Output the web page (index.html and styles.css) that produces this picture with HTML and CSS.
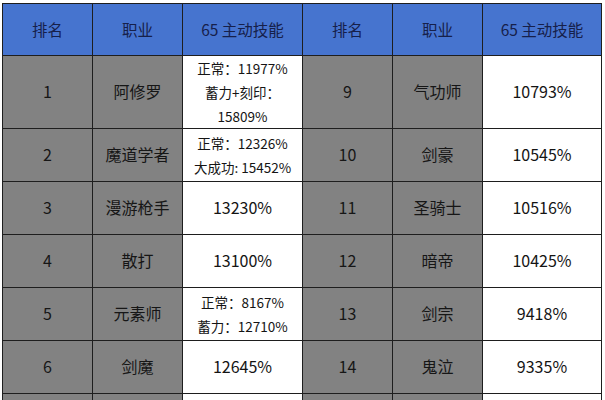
FILE: index.html
```html
<!DOCTYPE html>
<html lang="zh-CN">
<head>
<meta charset="utf-8">
<link rel="stylesheet" href="styles.css">
</head>
<body>
<table class="rank">
  <colgroup>
    <col class="c-rank"><col class="c-job"><col class="c-skill">
    <col class="c-rank"><col class="c-job"><col class="c-skill2">
  </colgroup>
  <thead>
    <tr class="head">
      <th>排名</th><th>职业</th><th>65 主动技能</th>
      <th>排名</th><th>职业</th><th>65 主动技能</th>
    </tr>
  </thead>
  <tbody>
    <tr class="tall">
      <td class="g">1</td><td class="g">阿修罗</td>
      <td class="w small"><div>正常：11977%</div><div>蓄力+刻印：</div><div>15809%</div></td>
      <td class="g">9</td><td class="g">气功师</td><td class="w">10793%</td>
    </tr>
    <tr>
      <td class="g">2</td><td class="g">魔道学者</td>
      <td class="w small"><div>正常：12326%</div><div>大成功: 15452%</div></td>
      <td class="g">10</td><td class="g">剑豪</td><td class="w">10545%</td>
    </tr>
    <tr>
      <td class="g">3</td><td class="g">漫游枪手</td><td class="w">13230%</td>
      <td class="g">11</td><td class="g">圣骑士</td><td class="w">10516%</td>
    </tr>
    <tr>
      <td class="g">4</td><td class="g">散打</td><td class="w">13100%</td>
      <td class="g">12</td><td class="g">暗帝</td><td class="w">10425%</td>
    </tr>
    <tr>
      <td class="g">5</td><td class="g">元素师</td>
      <td class="w small"><div>正常：8167%</div><div>蓄力：12710%</div></td>
      <td class="g">13</td><td class="g">剑宗</td><td class="w">9418%</td>
    </tr>
    <tr>
      <td class="g">6</td><td class="g">剑魔</td><td class="w">12645%</td>
      <td class="g">14</td><td class="g">鬼泣</td><td class="w">9335%</td>
    </tr>
    <tr>
      <td class="g"></td><td class="g"></td><td class="w"></td>
      <td class="g"></td><td class="g"></td><td class="w"></td>
    </tr>
  </tbody>
</table>
</body>
</html>
```

FILE: styles.css
```css
html, body {
  margin: 0;
  padding: 0;
  background: #ffffff;
}

body {
  font-family: "Noto Sans CJK SC", "Noto Sans", sans-serif;
  color: #141414;
  padding: 3px 0 0 2px;
}

.rank {
  border-collapse: collapse;
  table-layout: fixed;
  width: 599px;
}

.c-rank, .c-job { width: 90px; }
.c-skill { width: 120px; }
.c-skill2 { width: 119px; }

.rank th,
.rank td {
  border: 1.5px solid #1e1e1e;
  text-align: center;
  vertical-align: middle;
  padding: 0;
  font-size: 16px;
  font-weight: 400;
  line-height: 1.2;
}

.head th {
  height: 51px;
  background: #4674cf;
  color: #16204a;
  font-size: 15.5px;
}

.rank td { height: 52px; }
.rank tr.tall td { height: 72px; }

.g { background: #828282; color: #161616; }
.w { background: #ffffff; font-size: 16px; }

.w.small { font-size: 13.5px; }
.w.small div { line-height: 24px; }
```
